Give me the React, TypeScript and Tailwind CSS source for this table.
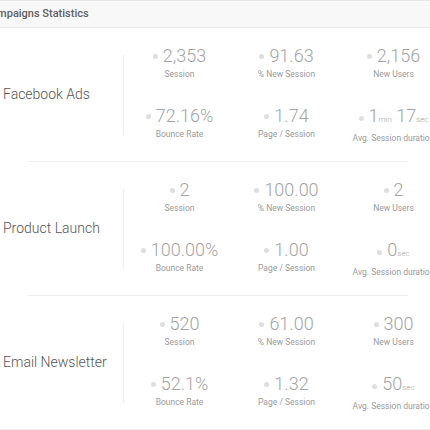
import React from 'react';

type Stat = { value: React.ReactNode; label: string };
type Campaign = { name: string; stats: Stat[] };

const Unit = ({ children }: { children: React.ReactNode }) => (
  <span className="text-[8px]">{children}</span>
);

const campaigns: Campaign[] = [
  {
    name: 'Facebook Ads',
    stats: [
      { value: '2,353', label: 'Session' },
      { value: '91.63', label: '% New Session' },
      { value: '2,156', label: 'New Users' },
      { value: '72.16%', label: 'Bounce Rate' },
      { value: '1.74', label: 'Page / Session' },
      { value: <>1<Unit>min</Unit> 17<Unit>sec</Unit></>, label: 'Avg. Session duration' },
    ],
  },
  {
    name: 'Product Launch',
    stats: [
      { value: '2', label: 'Session' },
      { value: '100.00', label: '% New Session' },
      { value: '2', label: 'New Users' },
      { value: '100.00%', label: 'Bounce Rate' },
      { value: '1.00', label: 'Page / Session' },
      { value: <>0<Unit>sec</Unit></>, label: 'Avg. Session duration' },
    ],
  },
  {
    name: 'Email Newsletter',
    stats: [
      { value: '520', label: 'Session' },
      { value: '61.00', label: '% New Session' },
      { value: '300', label: 'New Users' },
      { value: '52.1%', label: 'Bounce Rate' },
      { value: '1.32', label: 'Page / Session' },
      { value: <>50<Unit>sec</Unit></>, label: 'Avg. Session duration' },
    ],
  },
];

const StatItem = ({ stat }: { stat: Stat }) => (
  <div className="flex flex-col items-center">
    <div className="flex items-center gap-[5px]">
      <span className="w-[5px] h-[5px] rounded-full bg-[#dedede]" />
      <span className="text-[18px] leading-[22px] font-light text-[#a4a4a4] whitespace-nowrap">{stat.value}</span>
    </div>
    <span className="text-[8.5px] leading-[12px] mt-[1px] font-normal text-[#9a9a9a] whitespace-nowrap">{stat.label}</span>
  </div>
);

export default function App() {
  return (
    <div className="w-[430px] h-[430px] overflow-hidden bg-white" style={{ fontFamily: 'Roboto, "Open Sans", sans-serif' }}>
      <div className="-ml-[20px] w-[480px] border-b border-[#ececec]">
        <div className="h-[28px] bg-[#f8f8f8] border-y border-[#e6e6e6] flex items-center pl-[4px]">
          <span className="text-[11px] font-medium text-[#606060]">Campaigns Statistics</span>
        </div>
        {campaigns.map((c, i) => (
          <div key={c.name}>
            {i > 0 && <div className="ml-[48px] mr-[52px] h-px bg-[#efefef]" />}
            <div className="flex items-center pt-[17px] pb-[17px]">
              <div className="w-[143px] pl-[23px] text-[14px] font-light text-[#555]">{c.name}</div>
              <div className="w-px h-[80px] bg-[#eeeeee]" />
              <div className="ml-[2px] grid grid-cols-[107px_107px_107px] gap-y-[25px]">
                {c.stats.map((s, j) => (
                  <StatItem key={j} stat={s} />
                ))}
              </div>
            </div>
          </div>
        ))}
      </div>
    </div>
  );
}
